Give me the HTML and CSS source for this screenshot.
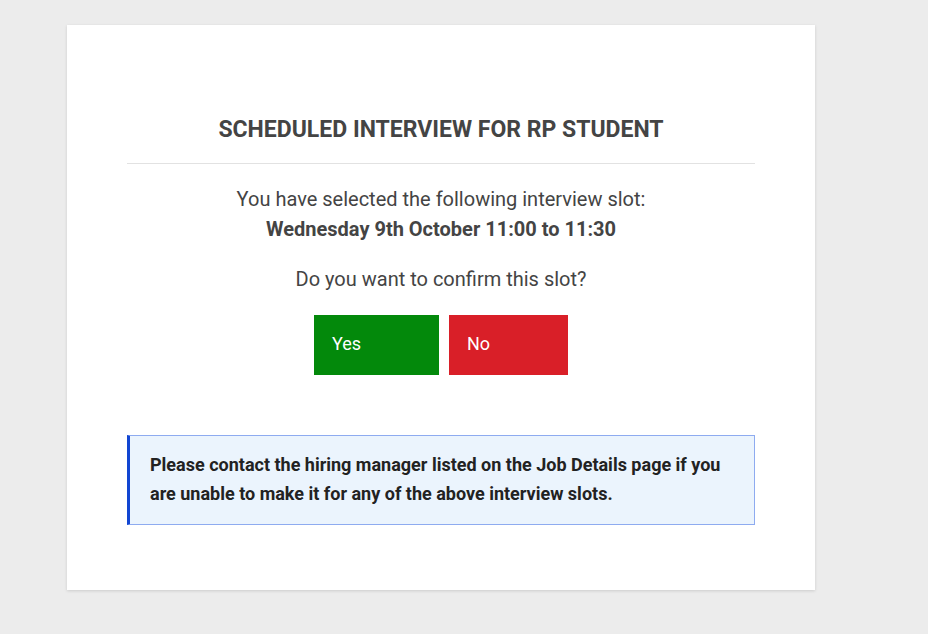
FILE: index.html
```html
<!DOCTYPE html>
<html lang="en">
<head>
<meta charset="utf-8">
<title>Scheduled Interview</title>
<link rel="stylesheet" href="styles.css">
</head>
<body>
<div class="page">
  <main class="card">
    <h2 class="title">SCHEDULED INTERVIEW FOR RP STUDENT</h2>
    <div class="body">
      <p class="selected">You have selected the following interview slot:<br><strong>Wednesday 9th October 11:00 to 11:30</strong></p>
      <p class="question">Do you want to confirm this slot?</p>
      <div class="actions">
        <button class="btn btn-yes" type="button">Yes</button>
        <button class="btn btn-no" type="button">No</button>
      </div>
      <div class="notice">Please contact the hiring manager listed on the Job Details page if you are unable to make it for any of the above interview slots.</div>
    </div>
  </main>
</div>
</body>
</html>
```
FILE: styles.css
```css
* { box-sizing: border-box; }
html, body { margin: 0; padding: 0; }
body {
  background: #ececec;
  font-family: Roboto, "Liberation Sans", Arial, sans-serif;
  color: #444;
}
.page {
  padding: 25px 0 44px 67px;
}
.card {
  width: 748px;
  background: #fff;
  box-shadow: 0 1px 3px rgba(0, 0, 0, 0.14);
  padding: 92px 60px 65px;
}
.title {
  margin: 0;
  padding-bottom: 20px;
  border-bottom: 1px solid #e2e2e2;
  font-size: 23px;
  line-height: 26px;
  font-weight: 700;
  text-align: center;
  color: #444;
}
.body {
  text-align: center;
}
.selected {
  margin: 20px 0 0;
  font-size: 20px;
  line-height: 30px;
}
.selected strong { font-weight: 700; }
.question {
  margin: 20px 0 0;
  font-size: 20px;
  line-height: 30px;
}
.actions {
  margin-top: 21px;
  display: flex;
  justify-content: center;
  gap: 10px;
}
.btn {
  border: 0;
  height: 60px;
  padding: 0 18px 3px;
  font-family: inherit;
  font-size: 18px;
  line-height: 20px;
  color: #fff;
  text-align: left;
  cursor: pointer;
}
.btn-yes { background: #03890b; width: 125px; }
.btn-no { background: #d91f28; width: 119px; }
.notice {
  margin-top: 60px;
  text-align: left;
  background: #ebf4fd;
  border: 1px solid #8eabf0;
  border-left: 3px solid #1246d2;
  padding: 14px 20px 16px;
  font-size: 18px;
  line-height: 29px;
  font-weight: 700;
  color: #222;
}
```
